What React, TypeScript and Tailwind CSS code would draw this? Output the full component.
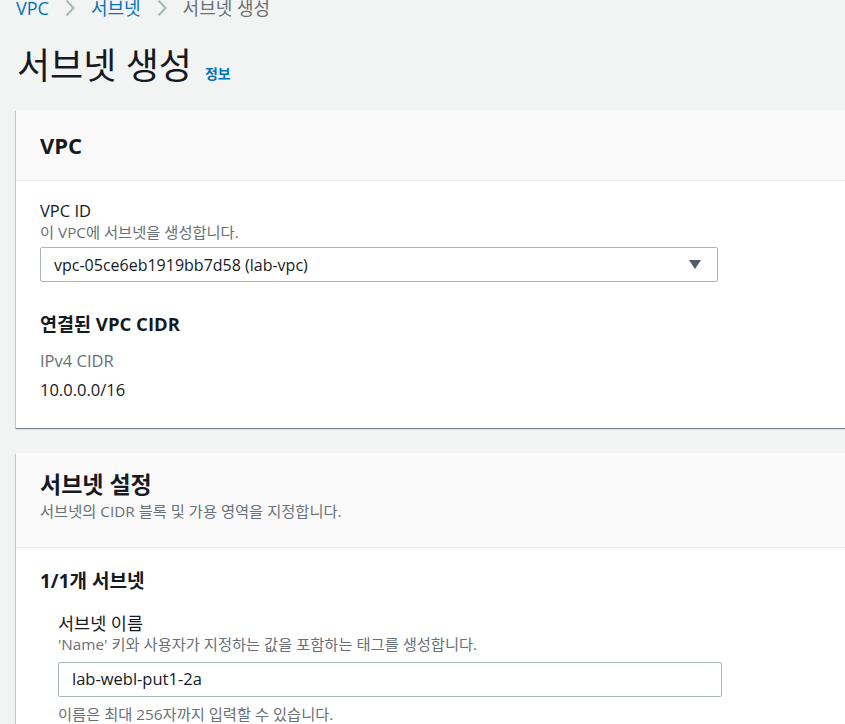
import React from 'react';

const FONT = '"Open Sans", "Noto Sans CJK KR", sans-serif';

const ChevronRight = () => (
  <svg width="10" height="18" viewBox="0 0 10 18" className="text-[#aab7b8] shrink-0">
    <path d="M1.5 1.5l7 7.5-7 7.5" fill="none" stroke="currentColor" strokeWidth="2" />
  </svg>
);

const CaretDown = () => (
  <svg width="12" height="9" viewBox="0 0 12 9" className="text-[#545b64]">
    <path d="M0 0h12L6 9z" fill="currentColor" />
  </svg>
);

const Card: React.FC<{ header: React.ReactNode; children: React.ReactNode }> = ({ header, children }) => (
  <section className="w-[860px] bg-white shadow-[0_1px_1px_0_rgba(0,28,36,0.3),1px_1px_1px_0_rgba(0,28,36,0.15),-1px_1px_1px_0_rgba(0,28,36,0.15)]">
    <div className="bg-[#fafafa] border-b border-[#eaeded] px-6">{header}</div>
    <div className="px-6">{children}</div>
  </section>
);

export default function App() {
  return (
    <div className="min-h-screen w-full overflow-hidden bg-[#f2f3f3] text-[#16191f]" style={{ fontFamily: FONT }}>
      <div className="pl-4">
        {/* breadcrumb */}
        <nav className="flex items-center h-[22px] -mt-[3px] text-[18px] leading-[22px]">
          <span className="text-[#0073bb]">VPC</span>
          <span className="ml-[16px] mr-[16px]"><ChevronRight /></span>
          <span className="text-[#0073bb]">서브넷</span>
          <span className="ml-[16px] mr-[16px]"><ChevronRight /></span>
          <span className="text-[#687078]">서브넷 생성</span>
        </nav>

        <div className="flex items-baseline gap-[13px] mt-[25px] pl-[1px]">
          <h1 className="text-[36px] leading-[44px] font-normal">서브넷 생성</h1>
          <span className="text-[14px] font-bold text-[#0073bb]">정보</span>
        </div>

        <div className="mt-[22px] flex flex-col gap-[25px]">
          <Card header={<div className="h-[70px] flex items-center text-[22px] font-bold">VPC</div>}>
            <div className="pt-[19px] pb-[27px]">
              <div className="text-[16.5px] leading-[22px]">VPC ID</div>
              <div className="text-[15.3px] leading-[21px] text-[#687078]">이 VPC에 서브넷을 생성합니다.</div>
              <div className="mt-1 w-[678px] h-[35px] border border-[#aab7b8] rounded-[2px] flex items-center justify-between pl-[13px] pr-[16px] text-[16px]">
                <span>vpc-05ce6eb1919bb7d58 (lab-vpc)</span>
                <CaretDown />
              </div>
              <div className="mt-[29px] text-[18.5px] leading-[26px] font-bold">연결된 VPC CIDR</div>
              <div className="mt-[13px] text-[16.5px] leading-[22px] text-[#687078]">IPv4 CIDR</div>
              <div className="mt-[7px] text-[16.5px] leading-[22px]">10.0.0.0/16</div>
            </div>
          </Card>

          <Card
            header={
              <div className="pt-[16px] pb-[26px]">
                <h2 className="text-[23px] leading-[30px] font-bold">서브넷 설정</h2>
                <p className="mt-[2px] text-[15.3px] leading-[20px] text-[#687078]">서브넷의 CIDR 블록 및 가용 영역을 지정합니다.</p>
              </div>
            }
          >
            <div className="pt-[20px] pb-6">
              <h3 className="text-[19px] leading-[26px] font-bold">1/1개 서브넷</h3>
              <div className="pl-[18px] mt-[18px]">
                <div className="text-[17.5px] leading-[22px]">서브넷 이름</div>
                <div className="text-[15.3px] leading-[20px] text-[#687078]">'Name' 키와 사용자가 지정하는 값을 포함하는 태그를 생성합니다.</div>
                <div className="mt-[8px] w-[664px] h-[35px] border border-[#aab7b8] rounded-[2px] flex items-center pl-[13px] text-[16.5px]">
                  lab-webl-put1-2a
                </div>
                <div className="mt-[7px] text-[15.3px] leading-[20px] text-[#687078]">이름은 최대 256자까지 입력할 수 있습니다.</div>
              </div>
            </div>
          </Card>
        </div>
      </div>
    </div>
  );
}
